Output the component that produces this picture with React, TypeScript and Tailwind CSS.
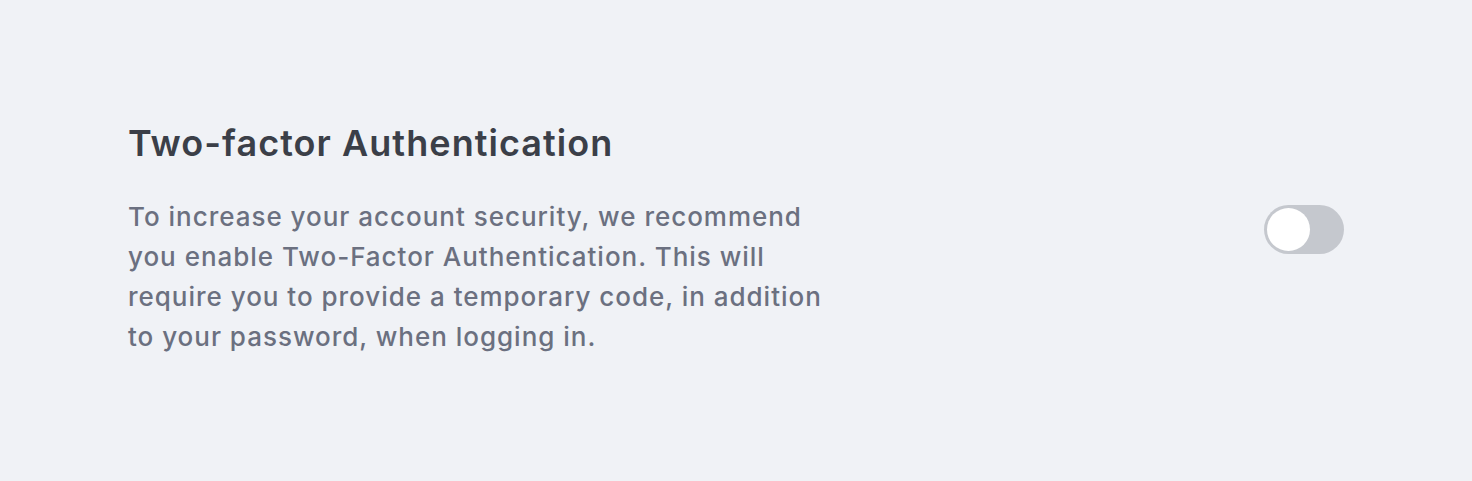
import React from "react";

export default function App() {
  return (
    <div className="w-[1472px] h-[481px] bg-[#f0f2f6] px-[128px] pt-[119px] font-['Inter',sans-serif]">
      <h2 className="text-[36px] leading-[48px] font-semibold text-[#3b3f48] tracking-[1.05px]">
        Two-factor Authentication
      </h2>
      <div className="mt-[30px] flex items-start justify-between">
        <p className="w-[700px] text-[26px] leading-[40px] font-medium text-[#6b7080] tracking-[0.98px]">
          To increase your account security, we recommend you enable Two-Factor Authentication. This will require you to provide a temporary code, in addition to your password, when logging in.
        </p>
        <button className="mt-[8px] w-[80px] h-[49px] rounded-full bg-[#c5c8ce] p-[3px] flex items-center">
          <span className="block w-[43px] h-[43px] rounded-full bg-white" />
        </button>
      </div>
    </div>
  );
}
